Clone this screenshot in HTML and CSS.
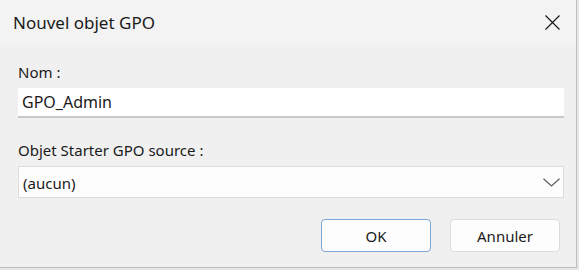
FILE: index.html
```html
<!DOCTYPE html>
<html lang="fr">
<head>
    <meta charset="UTF-8">
    <title>Nouvel objet GPO</title>
    <link rel="stylesheet" href="styles.css">
</head>
<body>

<div class="window">
    <div class="titlebar">
        <span class="title">Nouvel objet GPO</span>
        <span class="close">
            <svg width="15" height="15" viewBox="0 0 15 15"><path d="M0.5 0.5L14.5 14.5M14.5 0.5L0.5 14.5" stroke="#1a1a1a" stroke-width="1.2" fill="none"/></svg>
        </span>
    </div>

    <div class="content">
        <label class="label">Nom :</label>
        <div class="input">GPO_Admin</div>

        <label class="label label-second">Objet Starter GPO source :</label>
        <div class="select">
            <span>(aucun)</span>
            <svg width="17" height="9" viewBox="0 0 17 9"><path d="M0.5 0.8L8.5 8L16.5 0.8" stroke="#606060" stroke-width="1.3" fill="none"/></svg>
        </div>

        <div class="buttons">
            <button class="btn btn-default">OK</button>
            <button class="btn">Annuler</button>
        </div>
    </div>
</div>

</body>
</html>
```

FILE: styles.css
```css
body {
    margin: 0;
    background: #e6e6e6;
    font-family: "Noto Sans", "Open Sans", Arial, sans-serif;
    color: #1a1a1a;
}
.window {
    width: 576px;
    height: 267px;
    background: #f0f0f0;
    border-right: 1px solid #bdbdbd;
    border-bottom: 1px solid #bdbdbd;
    display: flex;
    flex-direction: column;
}
.titlebar {
    height: 45px;
    background: #f3f3f3;
    display: flex;
    align-items: center;
    justify-content: space-between;
    padding: 0 16px 0 13px;
}
.title {
    font-size: 17px;
    margin-top: -1px;
}
.close {
    display: flex;
}
.content {
    padding: 17px 12px 0 18px;
    display: flex;
    flex-direction: column;
}
.label {
    font-size: 15px;
    line-height: 20px;
}
.label-second {
    margin-top: 22px;
}
.input {
    margin-top: 6px;
    height: 28px;
    background: #fff;
    border-bottom: 2px solid #c8c8c8;
    font-size: 16px;
    line-height: 29px;
    padding-left: 4px;
}
.select {
    margin-top: 6px;
    height: 29px;
    background: #fdfdfd;
    border: 1px solid #dcdcdc;
    display: flex;
    align-items: center;
    justify-content: space-between;
    padding: 1px 3px 0 4px;
    box-sizing: content-box;
    font-size: 15px;
}
.select svg {
    margin-top: -1px;
}
.buttons {
    display: flex;
    justify-content: flex-end;
    gap: 19px;
    margin-top: 21px;
    padding-right: 4px;
}
.btn {
    width: 110px;
    height: 33px;
    background: #fdfdfd;
    border: 1px solid #dcdcdc;
    border-radius: 4px;
    font-family: inherit;
    font-size: 15px;
    color: #1a1a1a;
}
.btn-default {
    border-color: #7da7d9;
}
```
